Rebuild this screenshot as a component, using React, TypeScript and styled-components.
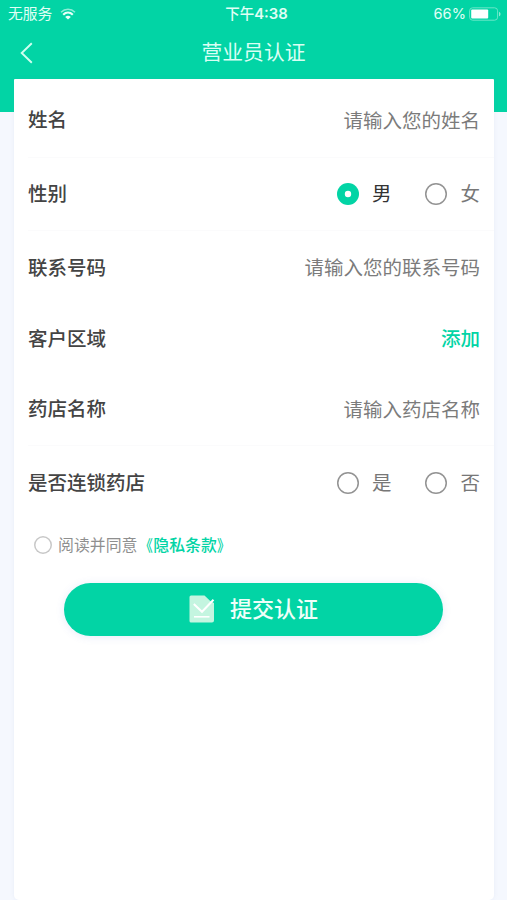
import React, { useState } from "react";
import styled, { createGlobalStyle } from "styled-components";

const GREEN = "#02d4a5";

const GlobalStyle = createGlobalStyle`
  * { box-sizing: border-box; }
  body {
    margin: 0;
    background: #f5f8fe;
    font-family: "Noto Sans CJK SC", "Noto Sans", sans-serif;
    color: #444;
  }
`;

const Screen = styled.div`
  width: 507px;
  height: 900px;
  overflow: hidden;
  display: flex;
  flex-direction: column;
  background: linear-gradient(${GREEN} 0 112px, #f5f8fe 112px);
`;

const StatusBar = styled.div`
  height: 27px;
  flex: none;
  display: grid;
  grid-template-columns: 1fr auto 1fr;
  align-items: center;
  padding: 0 6px 0 8px;
  color: #e0fff5;
  font-size: 14.8px;
  line-height: 26px;
`;

const StatusSide = styled.div<{ $end?: boolean }>`
  display: flex;
  align-items: center;
  justify-content: ${(p) => (p.$end ? "flex-end" : "flex-start")};
  gap: ${(p) => (p.$end ? "3px" : "8px")};
`;

const Carrier = styled.span`
  padding-bottom: 2px;
`;

const Clock = styled.div`
  display: flex;
  padding: 0 0 1px 4px;
  font-size: 14.5px;
  font-weight: 500;
`;

const Digits = styled.span<{ $bold?: boolean }>`
  padding-top: ${(p) => (p.$bold ? "1px" : "0")};
  font-family: Inter, "Liberation Sans", sans-serif;
  font-size: ${(p) => (p.$bold ? "14.8px" : "14.6px")};
  font-weight: ${(p) => (p.$bold ? 600 : 400)};
`;

const NavBar = styled.header`
  height: 52px;
  flex: none;
  display: grid;
  grid-template-columns: 60px 1fr 60px;
  align-items: center;
`;

const BackButton = styled.button`
  display: flex;
  padding: 0 0 0 19px;
  border: 0;
  background: none;
`;

const Title = styled.h1`
  margin: 0;
  padding-bottom: 4px;
  text-align: center;
  font-size: 20.8px;
  line-height: 48px;
  font-weight: 400;
  color: #d9fff4;
`;

const Card = styled.main`
  flex: 1;
  margin: 0 13px 0 14px;
  padding-top: 4px;
  background: #fff;
  border-radius: 1px 1px 5px 5px;
  box-shadow: 0 0 4px rgba(120, 140, 190, 0.1);
`;

const Row = styled.div<{ $height: number; $line?: boolean }>`
  height: ${(p) => p.$height}px;
  margin-left: 14px;
  padding-right: 14px;
  display: flex;
  align-items: center;
  justify-content: space-between;
  font-size: 19.5px;
  line-height: 28px;
  border-bottom: ${(p) => (p.$line ? "1px solid #fbfbfc" : "0")};
`;

const Label = styled.label`
  padding-bottom: 2px;
  font-weight: 500;
  color: #444;
`;

const Field = styled.input`
  width: 240px;
  height: 30px;
  padding: 0 0 2px;
  border: 0;
  outline: 0;
  background: none;
  text-align: right;
  font: inherit;
  color: #444;
  &::placeholder {
    color: #7b7b7b;
    opacity: 1;
  }
`;

const AddButton = styled.button`
  padding: 0 0 2px;
  border: 0;
  background: none;
  font: inherit;
  font-weight: 500;
  color: ${GREEN};
`;

const Options = styled.div`
  display: flex;
  gap: 34px;
`;

const Option = styled.button<{ $on: boolean }>`
  display: flex;
  align-items: center;
  gap: 13px;
  padding: 0;
  border: 0;
  background: none;
  font: inherit;
  color: ${(p) => (p.$on ? "#333" : "#777")};
`;

const OptionText = styled.span`
  padding-bottom: 2px;
`;

const Dot = styled.span<{ $on: boolean }>`
  width: 22px;
  height: 22px;
  border-radius: 50%;
  box-shadow: inset 0 0 0 ${(p) => (p.$on ? `7.8px ${GREEN}` : "1.5px #939393")};
  background: #fff;
`;

const Agreement = styled.div`
  display: flex;
  align-items: center;
  height: 24px;
  margin: 13px 0 0 20px;
  font-size: 15.9px;
  line-height: 24px;
  color: #8f8f8f;
`;

const Check = styled.span<{ $on: boolean }>`
  width: 18px;
  height: 18px;
  margin-right: 6px;
  border-radius: 50%;
  box-shadow: inset 0 0 0 1.5px ${(p) => (p.$on ? GREEN : "#c8c8c8")};
`;

const Policy = styled.span`
  font-weight: 500;
  color: ${GREEN};
`;

const Bracket = styled.span<{ $close?: boolean }>`
  display: inline-block;
  transform: scaleX(0.82);
  transform-origin: ${(p) => (p.$close ? "left" : "right")} center;
`;

const Submit = styled.button`
  width: 379px;
  height: 53px;
  margin: 26px 0 0 50px;
  padding: 0 0 1px;
  display: flex;
  align-items: center;
  justify-content: center;
  gap: 15px;
  border: 0;
  border-radius: 27px;
  background: ${GREEN};
  box-shadow: 0 1px 8px rgba(70, 100, 200, 0.13);
  font: 500 22px/32px "Noto Sans CJK SC", sans-serif;
  color: #effff9;
`;

const SubmitText = styled.span`
  padding-bottom: 4px;
`;

const WifiIcon = () => (
  <svg width="16" height="12" viewBox="0 0 16 12" fill="none" stroke="#e9fff8">
    <path d="M1 4.2C5 .3 11 .3 15 4.2" strokeWidth="1.5" opacity=".6" />
    <path d="M3.2 6.7C6 4 10 4 12.8 6.7" strokeWidth="2.2" />
    <path d="M5.2 8.9C6.9 7.4 9.1 7.4 10.8 8.9L8 11.6Z" fill="#e9fff8" stroke="none" />
  </svg>
);

const BatteryIcon = () => (
  <svg width="32" height="14" viewBox="0 0 32 14">
    <rect x=".6" y=".8" width="28" height="12.4" rx="3" fill="none" stroke="#6ae6c8" />
    <rect x="2.2" y="2.5" width="17" height="9" rx="1" fill="#fff" />
    <path d="M30 4.7c2 .8 2 3.8 0 4.6Z" fill="#8aedd3" />
  </svg>
);

const BackIcon = () => (
  <svg width="16" height="22" viewBox="0 0 16 22" fill="none" stroke="#cffff0" strokeWidth="1.9">
    <path d="M12.8 1.2 2.7 11 12.8 20.8" />
  </svg>
);

const FormIcon = () => (
  <svg width="26" height="28" viewBox="0 0 26 28" fill="none">
    <path d="M2 .5H15.5L21 5.8 25 8V25.5a2 2 0 0 1-2 2H2a1.5 1.5 0 0 1-1.5-1.5V2A1.5 1.5 0 0 1 2 .5Z" fill="#c4f5e0" />
    <path d="M4.8 9 13 16.8 24.5 4.8" stroke="#fff" strokeWidth="2" />
    <path d="M5 21.8H20.5" stroke="#fff" strokeWidth="1.6" />
  </svg>
);

type ChoiceProps = { items: string[]; value: string; onChange: (v: string) => void };

const Choice = ({ items, value, onChange }: ChoiceProps) => (
  <Options>
    {items.map((item) => (
      <Option key={item} type="button" $on={value === item} onClick={() => onChange(item)}>
        <Dot $on={value === item} />
        <OptionText>{item}</OptionText>
      </Option>
    ))}
  </Options>
);

export default function App() {
  const [gender, setGender] = useState("男");
  const [chain, setChain] = useState("");
  const [agreed, setAgreed] = useState(false);

  return (
    <>
      <GlobalStyle />
      <Screen>
        <StatusBar>
          <StatusSide>
            <Carrier>无服务</Carrier>
            <WifiIcon />
          </StatusSide>
          <Clock>
            下午<Digits $bold>4:38</Digits>
          </Clock>
          <StatusSide $end>
            <Digits>66%</Digits>
            <BatteryIcon />
          </StatusSide>
        </StatusBar>
        <NavBar>
          <BackButton type="button" aria-label="返回">
            <BackIcon />
          </BackButton>
          <Title>营业员认证</Title>
        </NavBar>
        <Card>
          <Row $height={75} $line>
            <Label>姓名</Label>
            <Field placeholder="请输入您的姓名" />
          </Row>
          <Row $height={73} $line>
            <Label>性别</Label>
            <Choice items={["男", "女"]} value={gender} onChange={setGender} />
          </Row>
          <Row $height={73}>
            <Label>联系号码</Label>
            <Field placeholder="请输入您的联系号码" />
          </Row>
          <Row $height={69}>
            <Label>客户区域</Label>
            <AddButton type="button">添加</AddButton>
          </Row>
          <Row $height={73} $line>
            <Label>药店名称</Label>
            <Field placeholder="请输入药店名称" />
          </Row>
          <Row $height={74}>
            <Label>是否连锁药店</Label>
            <Choice items={["是", "否"]} value={chain} onChange={setChain} />
          </Row>
          <Agreement onClick={() => setAgreed(!agreed)}>
            <Check $on={agreed} />
            阅读并同意
            <Policy>
              <Bracket>《</Bracket>隐私条款<Bracket $close>》</Bracket>
            </Policy>
          </Agreement>
          <Submit type="button">
            <FormIcon />
            <SubmitText>提交认证</SubmitText>
          </Submit>
        </Card>
      </Screen>
    </>
  );
}
